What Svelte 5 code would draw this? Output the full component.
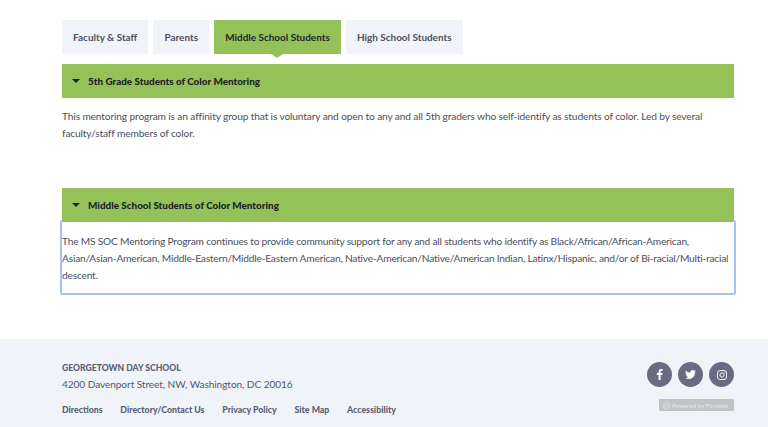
<script>
    const tabs = ['Faculty & Staff', 'Parents', 'Middle School Students', 'High School Students'];
    const active = 'Middle School Students';
    const links = ['Directions', 'Directory/Contact Us', 'Privacy Policy', 'Site Map', 'Accessibility'];
</script>

<div class="page">
    <main class="content">
        <nav class="tabs">
            {#each tabs as tab}
                <button class="tab" class:active={tab === active}>{tab}</button>
            {/each}
        </nav>

        <section class="group first">
            <h3 class="bar"><span class="caret"></span>5th Grade Students of Color Mentoring</h3>
            <div class="panel">
                This mentoring program is an affinity group that is voluntary and open to any and all 5th graders who self-identify as students of color. Led by several faculty/staff members of color.
            </div>
        </section>

        <section class="group second">
            <h3 class="bar"><span class="caret"></span>Middle School Students of Color Mentoring</h3>
            <div class="panel focused">
                The MS SOC Mentoring Program continues to provide community support for any and all students who identify as Black/African/African-American, Asian/Asian-American, Middle-Eastern/Middle-Eastern American, Native-American/Native/American Indian, Latinx/Hispanic, and/or of <span class="nowrap">Bi-racial/Multi-racial</span> descent.
            </div>
        </section>
    </main>

    <footer class="footer">
        <div class="info">
            <div class="school">GEORGETOWN DAY SCHOOL</div>
            <div class="address">4200 Davenport Street, NW, Washington, DC 20016</div>
            <div class="links">
                {#each links as link}
                    <span>{link}</span>
                {/each}
            </div>
        </div>
        <div class="side">
            <div class="social">
                <span class="circle">
                    <svg width="13" height="13" viewBox="0 0 24 24"><path fill="#fff" d="M14 22v-9h3.2l.5-3.6H14V7.2c0-1 .3-1.8 1.8-1.8h1.9V2.200C17.300 2.100 16.200 2 15 2c-2.800 0-4.700 1.700-4.700 4.800v2.600H7V13h3.300v9z"/></svg>
                </span>
                <span class="circle">
                    <svg width="13" height="13" viewBox="0 0 24 24"><path fill="#fff" d="M22 5.900c-.7.300-1.500.5-2.400.6.900-.5 1.500-1.300 1.800-2.300-.8.500-1.700.8-2.600 1a4.100 4.100 0 0 0-7 3.700A11.600 11.600 0 0 1 3.400 4.700a4.100 4.100 0 0 0 1.300 5.500c-.7 0-1.300-.2-1.900-.5 0 2 1.400 3.700 3.300 4.100-.6.200-1.200.2-1.800.1.500 1.600 2 2.800 3.800 2.800A8.200 8.200 0 0 1 2 18.400 11.600 11.600 0 0 0 20 8.100c.8-.6 1.500-1.300 2-2.200z"/></svg>
                </span>
                <span class="circle">
                    <svg width="12" height="12" viewBox="0 0 24 24" fill="none" stroke="#fff" stroke-width="1.800"><rect x="3" y="3" width="18" height="18" rx="5"/><circle cx="12" cy="12" r="4.200"/><circle cx="17.300" cy="6.700" r="1" fill="#fff" stroke="none"/></svg>
                </span>
            </div>
            <div class="badge">
                <svg width="9" height="9" viewBox="0 0 24 24" fill="none" stroke="#dfe2e2" stroke-width="2"><path d="M12 2l8.700 5v10L12 22l-8.700-5V7z"/><circle cx="12" cy="12" r="4"/></svg>
                <span>Powered by Finalsite</span>
            </div>
        </div>
    </footer>
</div>

<style>
    :global(body) {
        margin: 0;
        background: #fff;
    }

    .page {
        width: 768px;
        height: 427px;
        overflow: hidden;
        font-family: 'Lato', 'Open Sans', sans-serif;
        color: #4c4f5c;
    }

    .content {
        height: 339px;
        box-sizing: border-box;
        padding: 20px 34px 0 62px;
    }

    .tabs {
        display: flex;
        gap: 5px;
    }

    .tab {
        height: 34px;
        padding: 0 11.1px;
        border: 0;
        background: #f0f3f8;
        color: #4e5160;
        font-family: inherit;
        font-size: 9.95px;
        font-weight: 700;
        position: relative;
    }

    .tab.active {
        background: #95c159;
        color: #23272b;
    }

    .tab.active::after {
        content: '';
        position: absolute;
        left: 50%;
        bottom: -4px;
        margin-left: -6px;
        border-left: 6px solid transparent;
        border-right: 6px solid transparent;
        border-top: 4px solid #95c159;
    }

    .group.first {
        margin-top: 10px;
        height: 124px;
    }

    .bar {
        display: flex;
        align-items: center;
        height: 34px;
        margin: 0;
        padding-left: 10px;
        background: #95c159;
        color: #1d2126;
        font-size: 9.9px;
        font-weight: 900;
        position: relative;
        z-index: 1;
    }

    .caret {
        width: 0;
        height: 0;
        margin-right: 8px;
        border-left: 4px solid transparent;
        border-right: 4px solid transparent;
        border-top: 4px solid #1d2126;
    }

    .panel {
        padding-top: 10px;
        font-size: 10.2px;
        letter-spacing: -0.14px;
        line-height: 17px;
        color: #4c4f5c;
    }

    .nowrap {
        white-space: nowrap;
    }

    .panel.focused {
        margin: -2px -2px 0;
        padding: 11px 0 0;
        border: 2px solid #a6c3f5;
        border-radius: 2px;
        height: 60px;
        letter-spacing: -0.2px;
    }

    .footer {
        height: 88px;
        box-sizing: border-box;
        padding: 23px 34px 0 62px;
        background: #f0f3f8;
        display: flex;
        justify-content: space-between;
    }

    .school {
        font-size: 8.6px;
        line-height: 13px;
        font-weight: 900;
        color: #5d6174;
    }

    .address {
        margin-top: 1px;
        font-size: 10.1px;
        letter-spacing: -0.07px;
        line-height: 16px;
        color: #55586a;
    }

    .links {
        display: flex;
        gap: 17.75px;
        margin-top: 11px;
        font-size: 8.75px;
        line-height: 13px;
        font-weight: 900;
        color: #5d6174;
    }

    .side {
        display: flex;
        flex-direction: column;
        align-items: flex-end;
        margin-top: -1px;
    }

    .social {
        display: flex;
        gap: 6px;
        margin-top: 1px;
    }

    .circle {
        width: 25px;
        height: 25px;
        border-radius: 50%;
        background: #686c82;
        display: flex;
        align-items: center;
        justify-content: center;
    }

    .badge {
        display: flex;
        align-items: center;
        gap: 1px;
        width: 75px;
        height: 12px;
        box-sizing: border-box;
        margin-top: 12px;
        padding-left: 3px;
        background: #bfc3c4;
        color: #e4e6e6;
        font-size: 6.2px;
        white-space: nowrap;
    }
</style>
